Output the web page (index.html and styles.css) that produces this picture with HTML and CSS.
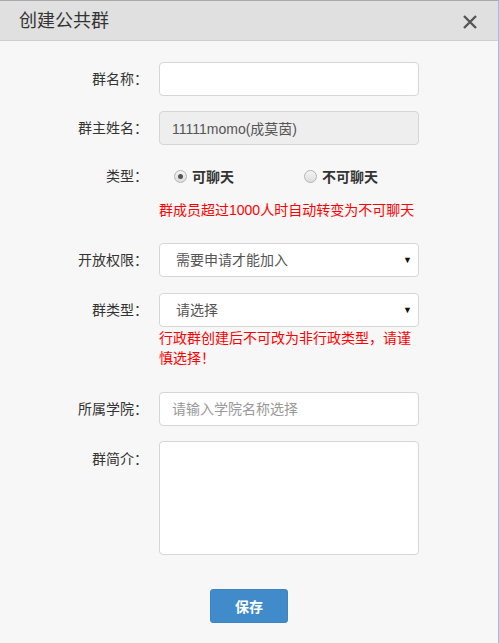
FILE: index.html
```html
<!DOCTYPE html>
<html lang="zh-CN">
<head>
  <meta charset="UTF-8">
  <meta name="viewport" content="width=device-width, initial-scale=1.0">
  <title>创建公共群</title>
  <link rel="stylesheet" href="styles.css">
</head>
<body>
  <div class="dialog">
    <div class="dialog-header">
      <h3 class="dialog-title">创建公共群</h3>
      <button class="close-btn" type="button" aria-label="关闭">
        <svg width="16" height="16" viewBox="0 0 16 16">
          <path d="M2 2 L14 14 M14 2 L2 14" stroke="#555" stroke-width="2.4" fill="none"/>
        </svg>
      </button>
    </div>

    <form class="dialog-body" id="groupForm">
      <div class="form-row">
        <label class="form-label" for="groupName">群名称：</label>
        <input class="form-control" type="text" id="groupName" name="groupName">
      </div>

      <div class="form-row">
        <label class="form-label" for="ownerName">群主姓名：</label>
        <input class="form-control" type="text" id="ownerName" value="11111momo(成莫茵)" disabled>
      </div>

      <div class="form-row row-radio">
        <span class="form-label">类型：</span>
        <div class="radio-group">
          <label class="radio-item">
            <input type="radio" name="chatType" value="1" checked>
            <span>可聊天</span>
          </label>
          <label class="radio-item">
            <input type="radio" name="chatType" value="0">
            <span>不可聊天</span>
          </label>
        </div>
      </div>
      <p class="hint hint-chat">群成员超过1000人时自动转变为不可聊天</p>

      <div class="form-row row-open">
        <label class="form-label" for="openLevel">开放权限：</label>
        <div class="select-wrap">
          <select class="form-control" id="openLevel">
            <option>需要申请才能加入</option>
            <option>允许任何人加入</option>
          </select>
        </div>
      </div>

      <div class="form-row row-kind">
        <label class="form-label" for="groupKind">群类型：</label>
        <div class="select-wrap">
          <select class="form-control" id="groupKind">
            <option>请选择</option>
            <option>行政群</option>
            <option>非行政群</option>
          </select>
        </div>
      </div>
      <p class="hint hint-kind">行政群创建后不可改为非行政类型，请谨慎选择！</p>

      <div class="form-row row-college">
        <label class="form-label" for="college">所属学院：</label>
        <input class="form-control" type="text" id="college" placeholder="请输入学院名称选择">
      </div>

      <div class="form-row row-intro">
        <label class="form-label" for="intro">群简介：</label>
        <textarea class="form-control" id="intro"></textarea>
      </div>

      <div class="form-actions">
        <button type="submit" class="btn-save">保存</button>
      </div>
    </form>
  </div>
</body>
</html>
```

FILE: styles.css
```css
body {
  margin: 0;
  padding: 0;
  font-family: "Liberation Sans", "Noto Sans CJK SC", sans-serif;
  font-size: 14px;
  color: #333;
  background-color: #f7f7f7;
}
.dialog {
  width: 499px;
  min-height: 643px;
  box-sizing: border-box;
  border-right: 1px solid #8ec3f7;
  background-color: #f7f7f7;
}
.dialog-header {
  height: 39px;
  display: flex;
  align-items: center;
  justify-content: space-between;
  padding: 0 20px 0 19px;
  background-color: #e0e0e0;
  border-top: 1px solid #a9a9a9;
  border-bottom: 1px solid #cfcfcf;
}
.dialog-title {
  margin: 0;
  font-size: 18px;
  font-weight: normal;
  color: #333;
  line-height: 24px;
}
.close-btn {
  border: none;
  background: none;
  padding: 0;
  width: 16px;
  height: 16px;
  margin-top: 3px;
  cursor: pointer;
}
.close-btn svg {
  display: block;
}
.dialog-body {
  margin: 0;
  padding: 21px 0 20px;
}
.form-row {
  display: flex;
  align-items: center;
  margin-bottom: 15px;
}
.form-label {
  width: 159px;
  flex: none;
  padding-right: 11px;
  text-align: right;
  line-height: 20px;
  color: #333;
  box-sizing: border-box;
}
.form-control {
  width: 260px;
  height: 34px;
  box-sizing: border-box;
  padding: 0 12px;
  border: 1px solid #d6d6d6;
  border-radius: 4px;
  background-color: #fff;
  font-family: "Liberation Sans", "Noto Sans CJK SC", sans-serif;
  font-size: 14px;
  color: #555;
  outline: none;
}
.form-control:disabled {
  background-color: #eee;
  color: #555;
}
.form-control::placeholder {
  color: #999;
}
.row-radio {
  height: 32px;
  margin-bottom: 8px;
}
.radio-group {
  display: flex;
  padding-left: 15px;
}
.radio-item {
  display: flex;
  align-items: center;
  width: 130px;
  font-weight: bold;
  color: #333;
  cursor: pointer;
}
.radio-item input {
  appearance: none;
  -webkit-appearance: none;
  width: 13px;
  height: 13px;
  margin: 0 5px 0 0;
  border: 1px solid #b5b5b5;
  border-radius: 50%;
  background: linear-gradient(#f4f4f4, #dcdcdc);
  box-sizing: border-box;
  position: relative;
}
.radio-item input:checked::after {
  content: "";
  position: absolute;
  top: 3px;
  left: 3px;
  width: 5px;
  height: 5px;
  border-radius: 50%;
  background-color: #555;
}
.hint {
  margin: 0 0 0 159px;
  width: 260px;
  color: #f00;
  line-height: 20px;
}
.hint-chat {
  margin-bottom: 23px;
}
.row-open {
  margin-bottom: 16px;
}
.row-kind {
  margin-bottom: 1px;
}
.hint-kind {
  margin-bottom: 24px;
}
.select-wrap {
  position: relative;
}
.select-wrap select {
  appearance: none;
  -webkit-appearance: none;
  padding-left: 16px;
}
.select-wrap::after {
  content: "▼";
  position: absolute;
  right: 7px;
  top: 12px;
  font-size: 9px;
  line-height: 10px;
  color: #111;
  pointer-events: none;
}
.row-intro {
  align-items: flex-start;
  margin-bottom: 34px;
}
.row-intro .form-label {
  padding-top: 8px;
}
.row-intro textarea {
  height: 114px;
  padding: 6px 12px;
  resize: none;
}
.form-actions {
  display: flex;
  justify-content: center;
}
.btn-save {
  width: 78px;
  height: 34px;
  border: 1px solid #3a85c2;
  border-radius: 3px;
  background-color: #428bca;
  color: #fff;
  font-family: "Liberation Sans", "Noto Sans CJK SC", sans-serif;
  font-size: 14px;
  font-weight: bold;
  cursor: pointer;
}
.btn-save:hover {
  background-color: #3071a9;
}
```
